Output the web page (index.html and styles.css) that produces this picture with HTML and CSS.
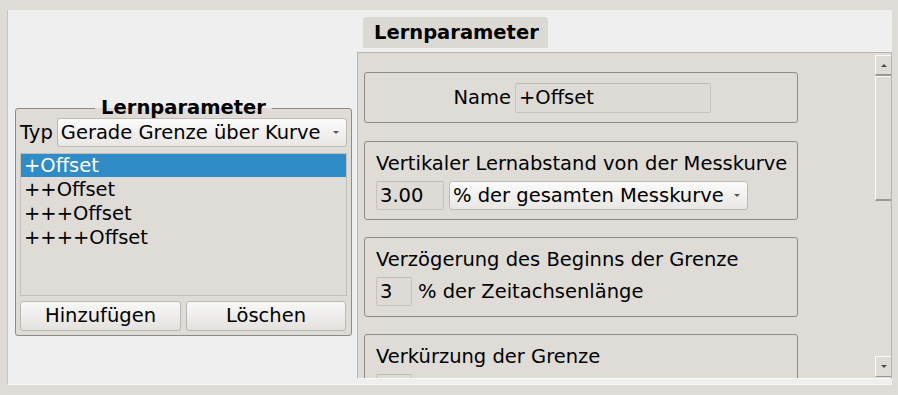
FILE: index.html
```
<!DOCTYPE html>
<html lang="de">
<head>
<meta charset="utf-8">
<title>Lernparameter</title>
<link rel="stylesheet" href="styles.css">
</head>
<body>
<div class="window">
  <div class="frame">
    <div class="left">
      <fieldset class="groupbox">
        <legend>Lernparameter</legend>
        <div class="typ-row">
          <span class="typ-label">Typ</span>
          <div class="combo combo-typ"><span>Gerade Grenze über Kurve</span><span class="arrow"></span></div>
        </div>
        <div class="list">
          <div class="item selected">+Offset</div>
          <div class="item">++Offset</div>
          <div class="item">+++Offset</div>
          <div class="item">++++Offset</div>
        </div>
        <div class="buttons">
          <div class="button">Hinzufügen</div>
          <div class="button">Löschen</div>
        </div>
      </fieldset>
    </div>
    <div class="right">
      <div class="tabbar">
        <div class="tab">Lernparameter</div>
      </div>
      <div class="pane">
        <div class="viewport">
          <div class="box box-name">
            <span class="name-label">Name</span>
            <div class="edit edit-name">+Offset</div>
          </div>
          <div class="box box-field">
            <div class="box-title">Vertikaler Lernabstand von der Messkurve</div>
            <div class="field-row">
              <div class="edit edit-num">3.00</div>
              <div class="combo combo-unit"><span>% der gesamten Messkurve</span><span class="arrow"></span></div>
            </div>
          </div>
          <div class="box box-field box-tall">
            <div class="box-title">Verzögerung des Beginns der Grenze</div>
            <div class="field-row">
              <div class="edit edit-small">3</div>
              <span class="unit">% der Zeitachsenlänge</span>
            </div>
          </div>
          <div class="box box-field box-tall">
            <div class="box-title">Verkürzung der Grenze</div>
            <div class="field-row">
              <div class="edit edit-small"></div>
            </div>
          </div>
        </div>
        <div class="scrollbar">
          <div class="sb-btn sb-up"><span class="sb-arrow-up"></span></div>
          <div class="sb-slider"></div>
          <div class="sb-track"></div>
          <div class="sb-btn sb-down"><span class="sb-arrow-down"></span></div>
        </div>
      </div>
    </div>
  </div>
</div>
</body>
</html>
```
FILE: styles.css
```
* { box-sizing: border-box; }
html, body { margin: 0; padding: 0; }
body {
  background: #dfdcd8;
  font-family: "DejaVu Sans", "Noto Sans", sans-serif;
  font-size: 19.5px;
  color: #000;
}
.window {
  width: 898px;
  height: 395px;
  padding: 10px 0 0 7px;
  overflow: hidden;
}
.frame {
  width: 885px;
  height: 375px;
  background: #efefef;
  border-left: 1px solid #c9c6c2;
  border-bottom: 1px solid #f7f7f7;
  display: flex;
}
.left {
  width: 349px;
  flex: none;
  padding: 88px 0 0 7px;
}
.groupbox {
  margin: 0;
  width: 337px;
  border: 1px solid #8f8c88;
  border-radius: 3px;
  background: #dfdcd8;
  padding: 0 4px 4px;
  min-width: 0;
}
.groupbox legend {
  margin: 0 auto;
  padding: 0 6px;
  font-weight: bold;
  line-height: 20px;
}
.typ-row {
  display: flex;
  align-items: center;
  gap: 4px;
  height: 29px;
}
.typ-label { flex: none; }
.combo {
  display: flex;
  align-items: center;
  justify-content: space-between;
  border: 1px solid #bdbab6;
  border-radius: 3px;
  background: linear-gradient(#fbfbfb, #e9e7e4);
  padding: 0 7px 0 3px;
  white-space: nowrap;
}
.combo-typ { flex: 1; height: 29px; }
.arrow {
  width: 0;
  height: 0;
  border-left: 3px solid transparent;
  border-right: 3px solid transparent;
  border-top: 3px solid #5a5a5a;
}
.list {
  margin-top: 6px;
  height: 143px;
  border: 1px solid #c3c0bc;
  background: #dfdcd8;
}
.item {
  height: 24px;
  line-height: 22px;
  padding: 1px 0 0 3px;
}
.item.selected {
  background: #308cc6;
  color: #fff;
  height: 23px;
}
.item.selected + .item { margin-top: 1px; }
.buttons {
  margin-top: 5px;
  display: grid;
  grid-template-columns: 161px 160px;
  gap: 5px;
}
.button {
  height: 30px;
  line-height: 28px;
  text-align: center;
  border: 1px solid #bbb8b4;
  border-radius: 3px;
  background: linear-gradient(#f8f8f7, #e4e2df);
}
.right {
  width: 535px;
  flex: none;
  display: flex;
  flex-direction: column;
}
.tabbar {
  height: 42px;
  padding: 7px 0 0 6px;
}
.tab {
  width: 185px;
  height: 31px;
  line-height: 31px;
  padding-left: 11px;
  background: #dcd9d5;
  border-radius: 3px 3px 0 0;
  font-weight: bold;
}
.pane {
  height: 327px;
  border: 1px solid #b8b5b1;
  border-bottom-color: #fafafa;
  background: #dfdcd8;
  display: flex;
}
.viewport {
  flex: 1;
  overflow: hidden;
  padding: 19px 0 0 6px;
}
.box {
  width: 434px;
  border: 1px solid #8f8c88;
  border-radius: 3px;
  margin-bottom: 17px;
}
.box-name {
  height: 51px;
  margin-bottom: 18px;
  padding-top: 10px;
  display: flex;
  gap: 4px;
}
.name-label {
  width: 146px;
  text-align: right;
  line-height: 30px;
}
.edit {
  height: 29px;
  line-height: 27px;
  padding-left: 3px;
  background: #dedbd7;
  border: 1px solid #c6c3bf;
  border-top-color: #bdbab6;
  border-radius: 2px;
}
.edit-name { width: 196px; height: 30px; line-height: 28px; }
.box-field {
  height: 79px;
  padding: 9px 0 0 11px;
}
.box-tall { height: 80px; }
.box-title {
  height: 26px;
  line-height: 26px;
  white-space: nowrap;
}
.field-row {
  margin-top: 4px;
  display: flex;
  align-items: center;
  gap: 5px;
}
.edit-num { width: 68px; }
.edit-small { width: 36px; }
.combo-unit { width: 299px; height: 29px; }
.unit { margin-left: 1px; }
.scrollbar {
  width: 16px;
  flex: none;
  display: flex;
  flex-direction: column;
  padding: 2px 0 1px;
}
.sb-btn {
  height: 21px;
  flex: none;
  display: flex;
  align-items: center;
  justify-content: center;
  border-top: 1px solid #fbfbfb;
  border-left: 1px solid #fbfbfb;
}
.sb-up { border-bottom: 2px solid #9a9793; }
.sb-down { border-bottom: 1px solid #9a9793; }
.sb-arrow-up {
  width: 0; height: 0;
  border-left: 3px solid transparent;
  border-right: 3px solid transparent;
  border-bottom: 3px solid #4a4a4a;
}
.sb-arrow-down {
  width: 0; height: 0;
  border-left: 3px solid transparent;
  border-right: 3px solid transparent;
  border-top: 3px solid #4a4a4a;
}
.sb-slider {
  height: 125px;
  flex: none;
  border-left: 1px solid #fbfbfb;
  border-top: 1px solid #fbfbfb;
  border-bottom: 2px solid #9a9793;
}
.sb-track { flex: 1; }
```
